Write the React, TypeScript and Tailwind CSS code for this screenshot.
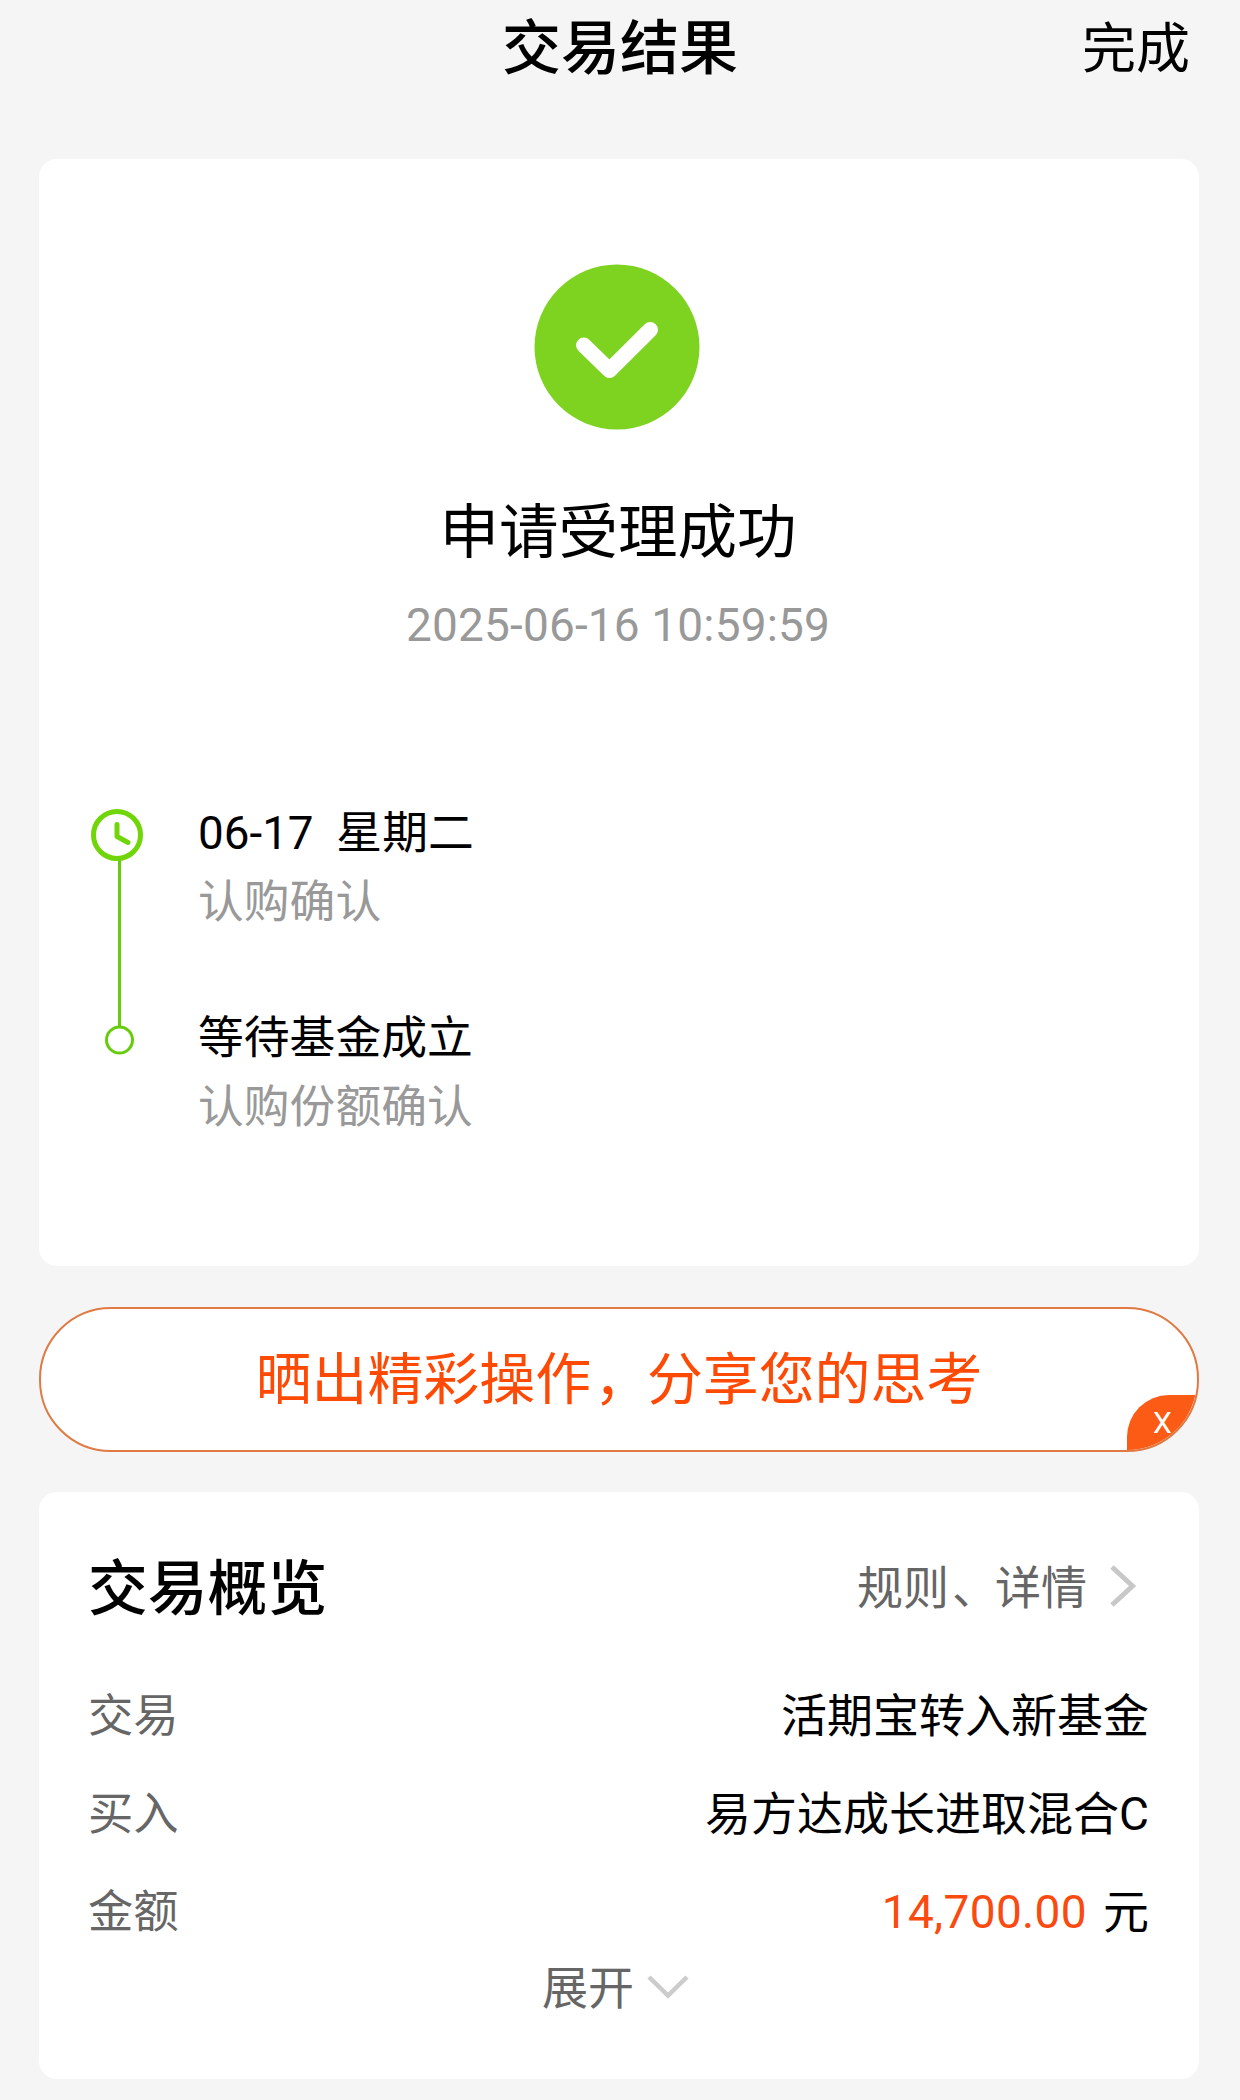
type Step = {
  title: string;
  desc: string;
};

type Row = {
  label: string;
  value: string;
};

const steps: Step[] = [
  { title: '06-17\u00a0 星期二', desc: '认购确认' },
  { title: '等待基金成立', desc: '认购份额确认' },
];

const rows: Row[] = [
  { label: '交易', value: '活期宝转入新基金' },
  { label: '买入', value: '易方达成长进取混合C' },
];

const SuccessIcon = () => (
  <svg className="mr-[2px] size-[166px]" viewBox="0 0 166 166" fill="none">
    <circle cx="83" cy="83" r="82.5" fill="#7ed321" />
    <path
      d="M49.8 81.3 75.5 106.3 116.2 65.7"
      stroke="#fff"
      strokeWidth="15.5"
      strokeLinecap="round"
      strokeLinejoin="round"
    />
  </svg>
);

const Timeline = () => (
  <svg className="w-[52px] h-[246px]" viewBox="0 0 52 246" fill="none">
    <path d="M28.5 50V218" stroke="#66cc0d" strokeWidth="3" />
    <circle cx="26" cy="26" r="23.5" stroke="#70d60a" strokeWidth="5" />
    <path
      d="M26 15.5V27.5L37 33.5"
      stroke="#70d60a"
      strokeWidth="5"
      strokeLinecap="round"
      strokeLinejoin="round"
    />
    <circle cx="28.5" cy="231" r="13" stroke="#66cc0d" strokeWidth="3" />
  </svg>
);

const Header = () => (
  <header className="grid grid-cols-3 h-[159px] pt-[17px] pr-[50px] pl-[50px] leading-[64px]">
    <h1 className="col-start-2 text-center text-[59px] font-medium">交易结果</h1>
    <button className="pt-px text-right self-start text-[54px]">完成</button>
  </header>
);

const ResultCard = () => (
  <section className="h-[1107px] rounded-[18px] bg-white pt-[105px]">
    <div className="flex flex-col items-center pr-[2px]">
      <SuccessIcon />
      <h2 className="mt-[67px] text-[59.5px] leading-[72px]">申请受理成功</h2>
      <p className="mt-[28px] text-[46px] leading-[56px] tracking-[0.15px] text-[#999]">
        2025-06-16 10:59:59
      </p>
    </div>
    <div className="mt-[156px] flex pl-[52px]">
      <Timeline />
      <ul className="ml-[55px] -mt-[10px] flex flex-col gap-[67px] text-[45.8px] leading-[69px]">
        {steps.map(({ title, desc }) => (
          <li key={title}>
            <p>{title}</p>
            <p className="text-[#999]">{desc}</p>
          </li>
        ))}
      </ul>
    </div>
  </section>
);

const ShareBanner = () => (
  <div className="relative mt-[41px] h-[145px] overflow-hidden rounded-[72px] border-2 border-[#e07a45] bg-white text-center text-[55.9px] leading-[143px] text-[#ff4a05]">
    晒出精彩操作<span className="pl-[3px] -mr-[3px]">，</span>分享您的思考
    <button className="absolute right-0 bottom-0 h-[55px] w-[70px] rounded-tl-[42px] bg-[#fb5b14] pl-[1px] text-center text-[30px] leading-[55px] text-white">
      X
    </button>
  </div>
);

const OverviewCard = () => (
  <section className="mt-[40px] h-[587px] rounded-[18px] bg-white px-[50px] pt-[60px] text-[46px]">
    <div className="flex items-center justify-between leading-[72px]">
      <h2 className="-ml-px pt-[2px] text-[59.8px] font-medium">交易概览</h2>
      <div className="-mt-[3px] flex items-center gap-[22px] pr-[12px] text-[#666]">
        <span>
          规则<span className="pl-[3px] -mr-[3px]">、</span>详情
        </span>
        <svg className="-mt-[3px] h-[44px] w-[28px]" viewBox="0 0 28 44" fill="none">
          <path d="M3 3 23.5 22 3 41" stroke="#c8c8c8" strokeWidth="5" />
        </svg>
      </div>
    </div>
    <dl className="mt-[41px] leading-[98px]">
      {rows.map(({ label, value }) => (
        <div key={label} className="flex justify-between">
          <dt className="-ml-px pt-px -mb-px text-[45.3px] text-[#666]">{label}</dt>
          <dd>{value}</dd>
        </div>
      ))}
      <div className="flex justify-between">
        <dt className="-ml-px pt-px -mb-px text-[45.3px] text-[#666]">金额</dt>
        <dd className="flex gap-[16px]">
          <span className="tracking-[0.35px] text-[#fa4a10]">14,700.00</span>
          <span>元</span>
        </dd>
      </div>
    </dl>
    <button className="mx-auto -mt-[3px] flex items-center gap-[13px] pr-[7px] leading-[60px] text-[#666]">
      展开
      <svg className="h-[26px] w-[42px]" viewBox="0 0 42 26" fill="none">
        <path d="M2 2 21 20.5 40 2" stroke="#ccc" strokeWidth="4.5" />
      </svg>
    </button>
  </section>
);

const App = () => {
  return (
    <div className="h-[2100px] w-[1240px] overflow-hidden bg-[#f5f5f5] font-['Roboto','Noto_Sans_CJK_SC',sans-serif] text-black">
      <Header />
      <main className="mr-[41px] ml-[39px]">
        <ResultCard />
        <ShareBanner />
        <OverviewCard />
      </main>
    </div>
  );
};

export default App;
